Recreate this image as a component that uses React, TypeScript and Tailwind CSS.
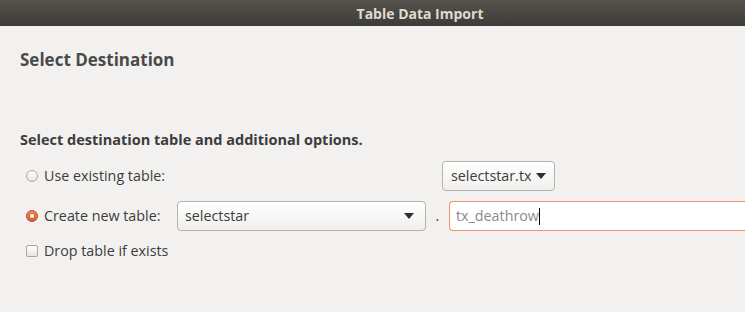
import { useState } from "react";

const font = { fontFamily: '"Open Sans", "Noto Sans", sans-serif' };

const Caret = () => (
  <svg width="10" height="6" viewBox="0 0 10 6" className="shrink-0">
    <path d="M0 0 L10 0 L5 6 Z" fill="#2e2e2e" />
  </svg>
);

const Radio = ({ checked }: { checked: boolean }) =>
  checked ? (
    <span className="w-[12px] h-[12px] rounded-full bg-gradient-to-b from-[#f0865c] to-[#d95a2b] border border-[#c1502a] flex items-center justify-center">
      <span className="w-[4px] h-[4px] rounded-full bg-white" />
    </span>
  ) : (
    <span className="w-[12px] h-[12px] rounded-full bg-gradient-to-b from-white to-[#e8e6e3] border border-[#a9a6a1]" />
  );

export default function App() {
  const [mode, setMode] = useState<"existing" | "new">("new");
  const [drop, setDrop] = useState(false);

  return (
    <div className="w-[745px] h-[312px] bg-[#f2f1f0] overflow-hidden" style={font}>
      <div className="h-[26px] bg-gradient-to-b from-[#57534e] to-[#3d3c38] flex items-center justify-center pl-[95px]">
        <span className="text-[14px] font-bold text-[#dfdbd2]">Table Data Import</span>
      </div>

      <div className="pl-[20px]">
        <h2 className="mt-[23px] text-[17px] font-bold text-[#4a4a4a] leading-[22px]">Select Destination</h2>

        <p className="mt-[59px] text-[14.5px] font-bold text-[#3c3c3c] leading-[20px]">
          Select destination table and additional options.
        </p>

        <div className="mt-[11px] flex items-center h-[30px] text-[14.3px] text-[#3c3c3c]">
          <button className="flex items-center gap-[6px] pl-[6px] w-[157px]" onClick={() => setMode("existing")}>
            <Radio checked={mode === "existing"} />
            <span>Use existing table:</span>
          </button>
          <div className="ml-[265px] h-[30px] w-[113px] rounded-[4px] border border-[#b6b3ae] bg-gradient-to-b from-white to-[#f0efed] flex items-center justify-between px-[8px]">
            <span>selectstar.tx</span>
            <Caret />
          </div>
        </div>

        <div className="mt-[10px] flex items-center h-[30px] text-[14.3px] text-[#3c3c3c]">
          <button className="flex items-center gap-[6px] pl-[6px] w-[157px]" onClick={() => setMode("new")}>
            <Radio checked={mode === "new"} />
            <span>Create new table:</span>
          </button>
          <div className="h-[30px] w-[249px] rounded-[4px] border border-[#b6b3ae] bg-gradient-to-b from-white to-[#f0efed] flex items-center justify-between pl-[7px] pr-[11px]">
            <span>selectstar</span>
            <Caret />
          </div>
          <span className="w-[23px] text-center">.</span>
          <div className="h-[30px] flex-1 rounded-l-[4px] border border-r-0 border-[#f0936d] bg-white flex items-center pl-[6px]">
            <span className="text-[#8a8a8a]">tx_deathrow</span>
            <span className="w-[1px] h-[17px] bg-black" />
          </div>
        </div>

        <button className="mt-[6px] flex items-center gap-[6px] pl-[6px] h-[28px] text-[14.3px] text-[#3c3c3c]" onClick={() => setDrop(!drop)}>
          <span className="w-[12px] h-[12px] rounded-[2px] border border-[#a9a6a1] bg-gradient-to-b from-white to-[#e8e6e3] flex items-center justify-center text-[10px] leading-none">
            {drop ? "✓" : ""}
          </span>
          <span>Drop table if exists</span>
        </button>
      </div>
    </div>
  );
}
